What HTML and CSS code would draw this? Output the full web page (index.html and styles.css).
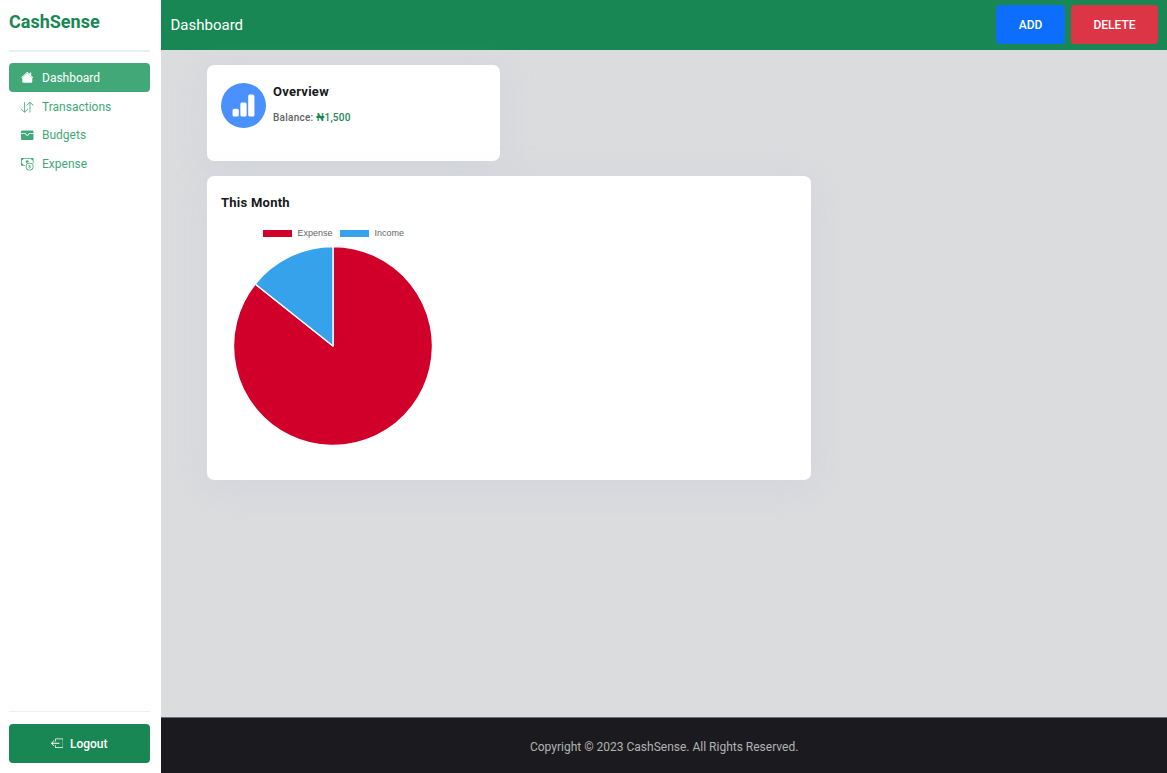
FILE: index.html
```html
<!DOCTYPE html>
<html lang="en">
<head>
<meta charset="utf-8">
<title>CashSense</title>
<link rel="stylesheet" href="styles.css">
</head>
<body>
<div class="app">
  <aside class="sidebar">
    <h1 class="brand">CashSense</h1>
    <hr class="rule">
    <nav class="menu">
      <a class="menu-item active"><svg class="icon" viewBox="0 0 16 16"><path d="M8.7 1.5a1 1 0 0 0-1.4 0L.65 8.15a.5.5 0 0 0 .7.7L8 2.2l6.65 6.65a.5.5 0 0 0 .7-.7L13 5.8V2.5a.5.5 0 0 0-.5-.5h-1a.5.5 0 0 0-.5.5v1.3L8.7 1.5Z"/><path d="m8 2.6 6.4 6.4v4.5a1.5 1.5 0 0 1-1.5 1.5H3.1a1.5 1.5 0 0 1-1.5-1.5V9L8 2.6Z"/></svg>Dashboard</a>
      <a class="menu-item"><svg class="icon" viewBox="0 0 16 16"><path d="M11.5 15a.5.5 0 0 0 .5-.5V2.7l3.15 3.15a.5.5 0 0 0 .7-.7l-4-4a.5.5 0 0 0-.7 0l-4 4a.5.5 0 1 0 .7.7L11 2.7v11.8a.5.5 0 0 0 .5.5Zm-7-14a.5.5 0 0 1 .5.5v11.8l3.15-3.15a.5.5 0 0 1 .7.7l-4 4a.5.5 0 0 1-.7 0l-4-4a.5.5 0 0 1 .7-.7L4 13.3V1.5a.5.5 0 0 1 .5-.5Z"/></svg>Transactions</a>
      <a class="menu-item"><svg class="icon" viewBox="0 0 16 16"><path d="M1.5 2A1.5 1.5 0 0 0 0 3.5v2h6a.5.5 0 0 1 .5.5c0 .25.08.67.3 1 .2.3.55.5 1.2.5s1-.2 1.2-.5c.22-.33.3-.75.3-1a.5.5 0 0 1 .5-.5h6v-2A1.5 1.5 0 0 0 14.5 2h-13Z"/><path d="M16 6.5h-5.55a2.7 2.7 0 0 1-.44 1.05C9.6 8.15 8.96 8.5 8 8.5s-1.6-.35-2.01-.95A2.7 2.7 0 0 1 5.55 6.5H0v6A1.5 1.5 0 0 0 1.5 14h13a1.5 1.5 0 0 0 1.5-1.5v-6Z"/></svg>Budgets</a>
      <a class="menu-item"><svg class="icon" viewBox="0 0 16 16"><path fill-rule="evenodd" d="M11 15a4 4 0 1 0 0-8 4 4 0 0 0 0 8Zm5-4a5 5 0 1 1-10 0 5 5 0 0 1 10 0Z"/><path d="M9.44 11.94c.04.6.52 1.08 1.37 1.13V13.5h.38v-.43c.9-.06 1.42-.54 1.42-1.23 0-.64-.4-.96-1.12-1.13l-.3-.07V9.47c.39.04.64.26.7.56h.66c-.05-.58-.54-1.03-1.36-1.08V8.5h-.38v.47c-.78.07-1.3.54-1.3 1.2 0 .58.39.95 1.04 1.1l.27.06v1.25c-.4-.06-.67-.28-.73-.6l-.65-.04Zm1.36-1.4c-.38-.1-.59-.27-.59-.54 0-.3.22-.52.6-.6v1.15l-.01-.01Zm.43.9c.46.1.68.28.68.6 0 .35-.27.6-.76.65v-1.27l.08.02Z"/><path d="M1 0a1 1 0 0 0-1 1v8a1 1 0 0 0 1 1h4.08c.06-.34.15-.68.26-1H3a2 2 0 0 0-2-2V3a2 2 0 0 0 2-2h10a2 2 0 0 0 2 2v3.53c.38.34.71.73 1 1.15V1a1 1 0 0 0-1-1H1Z"/><path d="M10 5.08V5a2 2 0 1 0-3.13 1.65A6 6 0 0 1 10 5.08Z"/></svg>Expense</a>
    </nav>
    <hr class="rule bottom">
    <button class="logout"><svg class="icon" viewBox="0 0 16 16"><path fill-rule="evenodd" d="M6 12.5a.5.5 0 0 0 .5.5h8a.5.5 0 0 0 .5-.5v-9a.5.5 0 0 0-.5-.5h-8a.5.5 0 0 0-.5.5v2a.5.5 0 0 1-1 0v-2A1.5 1.5 0 0 1 6.5 2h8A1.5 1.5 0 0 1 16 3.5v9a1.5 1.5 0 0 1-1.5 1.5h-8A1.5 1.5 0 0 1 5 12.5v-2a.5.5 0 0 1 1 0v2Z"/><path fill-rule="evenodd" d="M.15 8.35a.5.5 0 0 1 0-.7l3-3a.5.5 0 1 1 .7.7L1.7 7.5h8.8a.5.5 0 0 1 0 1H1.7l2.15 2.15a.5.5 0 0 1-.7.7l-3-3Z"/></svg>Logout</button>
  </aside>
  <div class="page">
    <header class="topbar">
      <span class="title">Dashboard</span>
      <button class="btn add">ADD</button>
      <button class="btn delete">DELETE</button>
    </header>
    <main class="content">
      <section class="card overview">
        <div class="badge"><svg viewBox="0 0 16 16"><path d="M1 11a1 1 0 0 1 1-1h2a1 1 0 0 1 1 1v3a1 1 0 0 1-1 1H2a1 1 0 0 1-1-1v-3Zm5-4a1 1 0 0 1 1-1h2a1 1 0 0 1 1 1v7a1 1 0 0 1-1 1H7a1 1 0 0 1-1-1V7Zm5-5a1 1 0 0 1 1-1h2a1 1 0 0 1 1 1v12a1 1 0 0 1-1 1h-2a1 1 0 0 1-1-1V2Z"/></svg></div>
        <div>
          <h2 class="heading">Overview</h2>
          <p class="balance">Balance: <span class="amount">₦1,500</span></p>
        </div>
      </section>
      <section class="card month">
        <h2 class="heading">This Month</h2>
        <div class="chart">
          <div class="legend">
            <span class="key expense"></span><span class="label">Expense</span>
            <span class="key income"></span><span class="label">Income</span>
          </div>
          <svg class="pie" viewBox="-100 -100 200 200">
            <path class="slice red" d="M0 0V-99.5A99.5 99.5 0 1 1 -77.8 -62.04Z"/>
            <path class="slice blue" d="M0 0L-77.8 -62.04A99.5 99.5 0 0 1 0 -99.5Z"/>
          </svg>
        </div>
      </section>
    </main>
    <footer class="footer">Copyright © 2023 CashSense. All Rights Reserved.</footer>
  </div>
</div>
</body>
</html>
```

FILE: styles.css
```css
* { box-sizing: border-box; }
body { margin: 0; font-family: Roboto, sans-serif; font-size: 12px; }
h1, h2, p { margin: 0; }
button { border: 0; font-family: inherit; color: #fff; }
.app { display: flex; height: 773px; overflow: hidden; }
.sidebar { width: 161.3px; flex: none; display: flex; flex-direction: column; padding: 9px 11.8px 9.8px 9px; background: #fff; }
.brand { font-size: 18px; line-height: 25px; font-weight: 700; color: #198754; }
.rule { width: 100%; height: 1.5px; margin: 16px 0 11.9px; border: 0; background: #e8f1ef; }
.rule.bottom { margin: auto 0 12px; background: #edf0f1; }
.menu-item { display: flex; align-items: center; height: 28.7px; padding-left: 12px; gap: 8.5px; border-radius: 4px; color: #42a878; line-height: 18px; }
.menu-item:nth-child(even) { padding-top: 1px; }
.menu-item.active { background: #42a878; color: #fff; }
.icon { width: 12.5px; height: 12.5px; fill: currentColor; flex: none; }
.logout { height: 39px; display: flex; align-items: center; justify-content: center; gap: 6.5px; padding: 0; background: #198754; border-radius: 4px; font-size: 12px; font-weight: 500; }
.page { flex: 1; display: flex; flex-direction: column; min-width: 0; background: #dbdcde; }
.topbar { height: 50px; display: flex; align-items: center; gap: 6px; padding: 0 9px 1px 9.2px; background: #198754; color: #fff; }
.title { margin-right: auto; font-size: 15px; }
.btn { height: 39px; padding: 0; border-radius: 4px; font-size: 12px; font-weight: 500; }
.add { width: 69px; background: #0d6efd; }
.delete { width: 87px; background: #dc3545; }
.content { flex: 1; display: flex; flex-direction: column; gap: 15.5px; padding: 15px 45.7px; }
.card { background: #fff; border-radius: 7px; box-shadow: 0 7px 34px rgba(189, 194, 212, .27); }
.overview { width: 293px; height: 95.5px; display: flex; gap: 7px; padding: 18px 14px; }
.badge { width: 45px; height: 45px; display: flex; align-items: center; justify-content: center; border-radius: 50%; background: #4a90ff; }
.badge svg { width: 25px; height: 25px; fill: #fff; }
.heading { font-size: 13px; line-height: 17px; font-weight: 700; letter-spacing: .25px; color: #16191c; }
.balance { margin-top: 11px; font-size: 10px; line-height: 14px; font-weight: 500; letter-spacing: .25px; color: #5d6368; }
.amount { color: #198754; }
.month { width: 603.6px; height: 303.5px; padding: 18px 14px; }
.chart { width: 225px; margin-top: 17px; }
.legend { display: flex; align-items: center; justify-content: center; height: 10px; padding-left: .4px; font: 9px/10px "Liberation Sans", Arial, sans-serif; color: #666; }
.key { width: 29px; height: 7px; margin-right: 5px; }
.expense { background: #d0002b; }
.income { background: #36a2eb; }
.label + .key { margin-left: 8px; }
.pie { display: block; width: 200px; height: 200px; margin: 8px 0 0 12px; }
.slice { stroke: #fff; stroke-width: 1.4; stroke-linejoin: round; }
.red { fill: #d0002b; }
.blue { fill: #36a2eb; }
.footer { height: 56px; flex: none; display: flex; align-items: center; justify-content: center; padding-top: 3px; border-top: 1px solid #6c7075; background: #1b1b1f; color: #b3b3b3; }
```
